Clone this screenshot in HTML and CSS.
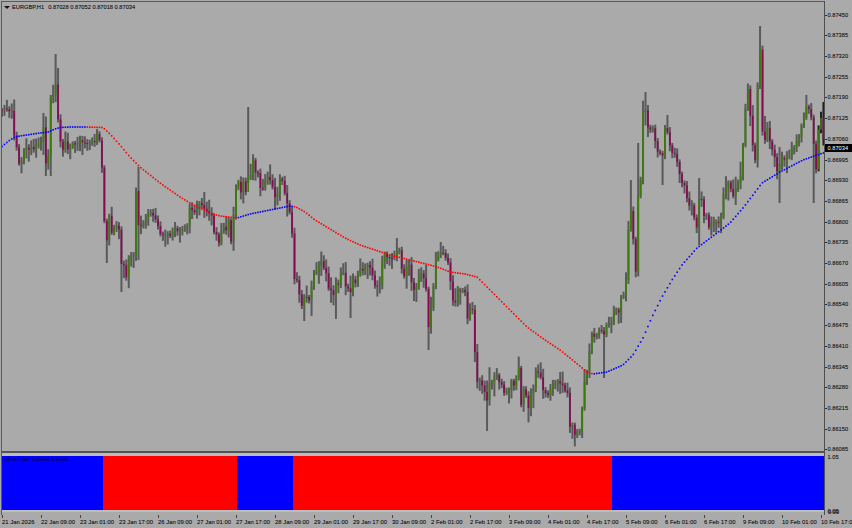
FILE: index.html
```html
<!DOCTYPE html>
<html lang="en">
<head>
<meta charset="utf-8">
<title>EURGBP,H1</title>
<link rel="stylesheet" href="styles.css">
</head>
<body>
<div class="terminal">
  <div class="panes">
    <div class="main-pane">
      <svg id="chart" class="plot" width="822" height="450" viewBox="0 0 822 450"></svg>
      <div class="legend"><span class="caret"></span><span class="symbol">EURGBP,H1</span><span>0.87028 0.87052 0.87018 0.87034</span></div>
    </div>
    <div class="filter-pane">
      <div class="seg blue"></div>
      <div class="seg red"></div>
      <div class="seg blue"></div>
      <div class="seg red"></div>
      <div class="seg blue"></div>
      <div class="filter-label">Ultra-Filter 0.0000 1.0000</div>
    </div>
  </div>
  <div class="price-axis">
    <div class="price">0.87450</div>
    <div class="price">0.87385</div>
    <div class="price">0.87320</div>
    <div class="price">0.87255</div>
    <div class="price">0.87190</div>
    <div class="price">0.87125</div>
    <div class="price">0.87060</div>
    <div class="price">0.86995</div>
    <div class="price">0.86930</div>
    <div class="price">0.86865</div>
    <div class="price">0.86800</div>
    <div class="price">0.86735</div>
    <div class="price">0.86670</div>
    <div class="price">0.86605</div>
    <div class="price">0.86540</div>
    <div class="price">0.86475</div>
    <div class="price">0.86410</div>
    <div class="price">0.86345</div>
    <div class="price">0.86280</div>
    <div class="price">0.86215</div>
    <div class="price">0.86150</div>
    <div class="price">0.86085</div>
    <div class="current">0.87034</div>
    <div class="sub-top">1.05</div>
    <div class="sub-bottom">0.05</div>
    <div class="sub-bottom alt">0.00</div>
  </div>
  <div class="time-axis">
    <span class="time">21 Jan 2026</span>
    <span class="time">22 Jan 09:00</span>
    <span class="time">23 Jan 01:00</span>
    <span class="time">23 Jan 17:00</span>
    <span class="time">26 Jan 09:00</span>
    <span class="time">27 Jan 01:00</span>
    <span class="time">27 Jan 17:00</span>
    <span class="time">28 Jan 09:00</span>
    <span class="time">29 Jan 01:00</span>
    <span class="time">29 Jan 17:00</span>
    <span class="time">30 Jan 09:00</span>
    <span class="time">2 Feb 01:00</span>
    <span class="time">2 Feb 17:00</span>
    <span class="time">3 Feb 09:00</span>
    <span class="time">4 Feb 01:00</span>
    <span class="time">4 Feb 17:00</span>
    <span class="time">5 Feb 09:00</span>
    <span class="time">6 Feb 01:00</span>
    <span class="time">6 Feb 17:00</span>
    <span class="time">9 Feb 09:00</span>
    <span class="time">10 Feb 01:00</span>
    <span class="time">10 Feb 17:00</span>
  </div>
</div>
<script src="chart.js"></script>
</body>
</html>
```
FILE: styles.css
```css
* { box-sizing: border-box; }
html, body { margin: 0; padding: 0; }
body {
  width: 852px;
  height: 528px;
  overflow: hidden;
  background: #aaaaaa;
  font-family: "Liberation Sans", Arial, sans-serif;
  color: #161616;
  text-shadow: 0 0 0.4px rgba(0, 0, 0, 0.4);
}
.terminal {
  display: grid;
  grid-template-columns: 825px 27px;
  grid-template-rows: 514px 14px;
  width: 852px;
  height: 528px;
  padding-top: 1px;
}
.panes {
  display: flex;
  flex-direction: column;
  border-left: 1px solid #5a5a5a;
  border-right: 1px solid #4e4e4e;
  margin-left: 1px;
}
.main-pane {
  position: relative;
  height: 452px;
  border-top: 1px solid #5a5a5a;
  border-bottom: 2px solid #555;
  overflow: hidden;
}
.plot { display: block; filter: blur(0.25px); }
.legend {
  position: absolute;
  left: 2px;
  top: 2px;
  display: flex;
  align-items: center;
  font-size: 5.7px;
  line-height: 7px;
  white-space: nowrap;
}
.caret {
  width: 0;
  height: 0;
  margin-right: 2px;
  border-left: 3px solid transparent;
  border-right: 3px solid transparent;
  border-top: 3px solid #111;
}
.symbol { margin-right: 4px; }
.filter-pane {
  position: relative;
  display: grid;
  grid-template-columns: 101px 134px 56px 319px 1fr;
  height: 59px;
  border-top: 3px solid #bcbcbc;
  border-bottom: 2px solid #bcbcbc;
}
.seg.blue { background: #0000ff; }
.seg.red { background: #ff0000; }
.filter-label {
  position: absolute;
  left: 2px;
  top: 0;
  font-size: 5.7px;
  line-height: 7px;
  color: #00003a;
  text-shadow: none;
  white-space: nowrap;
}
.price-axis {
  position: relative;
  grid-row: 1 / 3;
  grid-column: 2;
  padding-top: 3.6px;
}
.price {
  position: relative;
  height: 20.71px;
  line-height: 20.71px;
  padding-left: 2.5px;
  font-size: 5.7px;
  white-space: nowrap;
}
.price::before {
  content: "";
  position: absolute;
  left: 0;
  top: 10px;
  width: 2px;
  height: 1px;
  background: #333;
}
.current {
  position: absolute;
  left: 0;
  top: 143px;
  width: 27px;
  height: 8px;
  padding-left: 2.5px;
  background: #000;
  color: #fff;
  font-size: 5.7px;
  line-height: 8px;
  text-shadow: none;
}
.sub-top, .sub-bottom {
  position: absolute;
  left: 2.5px;
  font-size: 5.7px;
  line-height: 7px;
}
.sub-top { top: 453px; }
.sub-bottom { top: 507px; }
.sub-bottom.alt { top: 508px; left: 3px; }
.time-axis {
  grid-row: 2;
  grid-column: 1;
  display: flex;
  padding-left: 2px;
  width: 852px;
  overflow: hidden;
}
.time {
  position: relative;
  flex: 0 0 39px;
  padding-top: 3.5px;
  font-size: 5.9px;
  line-height: 7px;
  white-space: nowrap;
}
.time::before {
  content: "";
  position: absolute;
  left: 0;
  top: 0;
  width: 1px;
  height: 3px;
  background: #444;
}
```
FILE: chart.js
```js
// Traced close series as x,y pairs, in page pixels.
var closes = [2,110,5,108,8,110,11,113,12,110,14,135,16,140,18,163,20,164,22,160,24,150,27,147,29,150,32,146,34,150,37,143,39,145,41,142,44,124,46,166,48,167,50,97,53,97,55,74,57,108,60,140,63,150,65,140,68,150,70,147,73,143,76,145,80,140,83,143,85,143,88,144,92,141,95,142,97,134,99,133,101,163,103,173,105,243,107,240,109,214,112,235,115,225,118,227,120,232,121,260,123,278,124,263,126,280,128,263,130,253,131,256,134,255,136,190,138.3,225,141,226,143,223,146,217,149,212,152,214,155,218,158,226,161,236,163,235,166,235,169,233,172,240,173,228,175,228,178,232,180,230,183,229,187,228,189,214,190,205,193,212,196,213,199,203,202,205,205,210,208,212,212,216,214,232,217,235,219,243,222,228,225,226,227,233,229,218,231,243,236,188,238,180,241,193,243,180,246,193,248,178,251,175,253,160,256,175,258,173,260,188,264,188,266,177,269,177,272,185,275,197,277,196,280,178,283,182,286,201,289,207,292,232,294,279,297,280,299,291,301,309,304,297,306,296,309,301,311,290,314,273,316,273,319,265,322,260,324,269,326,272,329,291,331,290,334,296,336,283,339,285,341,272,344,273,346,289,349,288,352,296,354,263,356,291,358,272,361,268,363,271,366,265,368,265,371,269,375,286,377,286,380,284,382,262,385,253,387,257,390,258,392,258,395,255,397,251,400,250,403,282,406,268,409,264,412,286,414,290,416,288,419,278,421,273,424,279,426,287,429,334,431,308,434,281,436,258,439,252,441,253,444,253,447,262,449,263,452,300,456,303,458,289,460,291,463,290,465,290,467,321,470,309,473,310,475,355,477,382,480,380,482,385,485,393,487,401,489,383,492,382,494,377,497,375,499,382,502,385,504,393,507,390,509,390,512,379,514,386,517,375,519,367,521,406,524,387,526,395,528,411,531,393,533,391,536,370,538,372,541,378,543,390,546,394,548,395,551,388,553,385,556,383,559,380,561,386,563,385,566,393,568,393,570,428,573,424,575,436,578,430,580,431,582,410,585,377,587,372,590,346,592,333,594,337,597,335,599,330,602,331,604,335,607,323,609,325,612,322,614,309,617,310,619,313,621,297,624,295,626,280,628,233,631,210,633,235,636,275,638,197,641,177,643,112,646,110,648,128,651,130,653,128,655,140,658,153,660,153,663,156,665,128,667,130,670,146,672,153,675,154,677,161,680,176,682,183,685,186,688,205,690,206,693,205,695,225,697,228,700,187,702,203,704,216,707,215,709,228,711,223,714,222,717,222,719,222,722,215,724,187,727,188,729,180,732,195,734,197,737,182,739,183,740,183,743,145,745,112,748,88,750,112,753,148,755,167,757,95,760,47,762,130,765,140,768,125,770,143,773,152,775,158,778,177,780,160,782,158,785,160,787,157,790,156,792,147,794,148,797,140,799,138,801,127,803,122,806,107,808,106,811,117,813,120,815,190,817,153,819,123,821,118,823,140];
// Long wicks: x, top, bottom (0 = keep the generated end).
var wicks = [[44,113,155],[46,0,176],[50,95,176],[55,54,0],[57,68,0],[107,0,263],[122,0,292],[138,167,260],[248,107,183],[304,0,321],[311,0,316],[336,0,319],[350,0,318],[396,238,0],[414,0,301],[429,0,350],[441,242,0],[487,0,431],[581,0,438],[604,0,378],[632,180,0],[638,143,0],[645,92,0],[663,0,185],[667,115,0],[700,178,245],[760,26,0],[765,116,0],[779,147,203],[806,95,0],[814,0,203],[823,102,0]];
var ma = [0,148,5,144,10,140,15,137,20,136,30,134.5,40,133,48,132,55,129,60,127.5,70,127,85,127,103,127.5,110,134,120,145,130,157,140,167,150,175,160,183,170,190,180,197,190,203,200,208,210,213,220,216,237,218,250,214,265,211,280,208,290,206,296,207,305,212,315,220,330,229,345,238,360,245,375,250,390,255,410,260,430,265,440,268,450,272,465,274,477,277,493,293,510,310,527,327,545,340,560,350,575,362,587,372,593,374,607,372,623,365,633,355,643,338,652,317,662,297,672,280,682,265,697,248,717,233,730,223,743,208,753,195,762,183,780,172,803,160,823,153];
var blueSpans = [[0,86],[237,293],[593,830]];

var STEP = 2.4375, OX = 2, OY = 2;
var svg = document.getElementById("chart");
var NS = "http://www.w3.org/2000/svg";
var seed = 12345;
function rnd() { seed = (seed * 1664525 + 1013904223) >>> 0; return seed / 4294967296; }
function interp(a, x) {
  if (x <= a[0]) return a[1];
  for (var i = 2; i < a.length; i += 2) {
    if (x <= a[i]) {
      var t = (x - a[i - 2]) / (a[i] - a[i - 2]);
      return a[i - 1] + t * (a[i + 1] - a[i - 1]);
    }
  }
  return a[a.length - 1];
}
function rect(x, y, w, h, fill) {
  var r = document.createElementNS(NS, "rect");
  r.setAttribute("x", x.toFixed(2));
  r.setAttribute("y", (y - OY).toFixed(2));
  r.setAttribute("width", w);
  r.setAttribute("height", Math.max(h, 1).toFixed(2));
  r.setAttribute("fill", fill);
  svg.appendChild(r);
}
var prev = interp(closes, OX), bodies = [];
for (var i = 0; i < 338; i++) {
  var px = OX + i * STEP;
  var c = interp(closes, px);
  var o = prev;
  var t = Math.min(o, c), b = Math.max(o, c);
  var hi = t - 2 - rnd() * rnd() * 14;
  var lo = b + 2 + rnd() * rnd() * 14;
  for (var w = 0; w < wicks.length; w++) {
    if (Math.abs(wicks[w][0] - px) <= STEP / 2) {
      if (wicks[w][1]) hi = wicks[w][1];
      if (wicks[w][2]) lo = wicks[w][2];
    }
  }
  rect(px - OX - 1, hi, 2, lo - hi, i > 334 ? "#222" : "#5a5a5a");
  bodies.push([px, t, b, c < o ? "#3c7d08" : "#880a52"]);
  prev = c;
}
bodies.forEach(function (v) {
  rect(v[0] - OX - 0.85, v[1], 1.7, v[2] - v[1], v[3]);
});
for (var k = 0; k < 338; k++) {
  var x = OX + k * STEP, y = interp(ma, x), blue = false;
  blueSpans.forEach(function (s) { if (x >= s[0] && x < s[1]) blue = true; });
  rect(x - OX - 0.8, y - 0.8, 1.6, 1.6, blue ? "#0000ff" : "#ff0000");
}
```
